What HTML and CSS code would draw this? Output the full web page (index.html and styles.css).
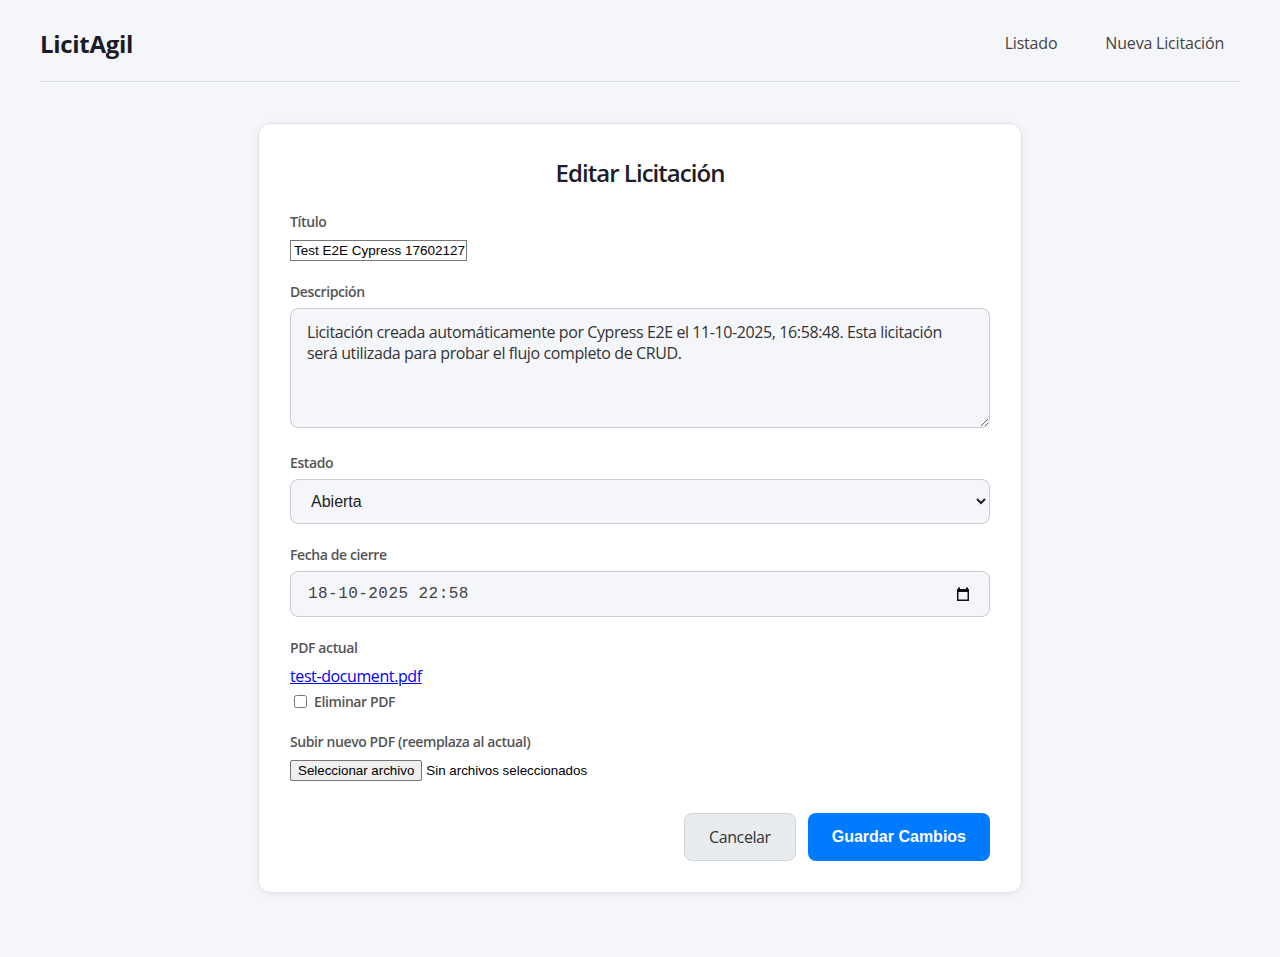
FILE: index.html
```html
<!DOCTYPE html>
<html lang="es">
<head>
<meta charset="utf-8">
<title>LicitAgil - Editar Licitación</title>
<link rel="stylesheet" href="styles.css">
</head>
<body>
<div class="page">
  <header class="topbar">
    <div class="brand">LicitAgil</div>
    <nav class="nav">
      <a class="nav-link" href="#">Listado</a>
      <a class="nav-link" href="#">Nueva Licitación</a>
    </nav>
  </header>

  <main class="card">
    <h1 class="card-title">Editar Licitación</h1>

    <div class="group">
      <label class="label">Título</label>
      <div class="plain-row"><input class="plain-input" type="text" value="Test E2E Cypress 1760212728"></div>
    </div>

    <div class="group group-desc">
      <label class="label">Descripción</label>
      <textarea class="field textarea">Licitación creada automáticamente por Cypress E2E el 11-10-2025, 16:58:48. Esta licitación será utilizada para probar el flujo completo de CRUD.</textarea>
    </div>

    <div class="group">
      <label class="label">Estado</label>
      <select class="field select">
        <option>Abierta</option>
        <option>Cerrada</option>
      </select>
    </div>

    <div class="group">
      <label class="label">Fecha de cierre</label>
      <div class="field date">
        <span class="date-text">18-10-2025 22:58</span>
        <svg class="cal-icon" width="14" height="14" viewBox="0 0 14 14" aria-hidden="true">
          <rect x="2" y="0.5" width="2" height="2.5" fill="#111"/>
          <rect x="10" y="0.5" width="2" height="2.5" fill="#111"/>
          <rect x="1" y="2" width="12" height="3" fill="#111"/>
          <rect x="1.75" y="2.75" width="10.5" height="10.5" fill="none" stroke="#111" stroke-width="1.5"/>
        </svg>
      </div>
    </div>

    <div class="group group-pdf">
      <label class="label">PDF actual</label>
      <a class="pdf-link" href="#">test-document.pdf</a>
      <label class="check-row"><input type="checkbox" class="check"> <span>Eliminar PDF</span></label>
    </div>

    <div class="group">
      <label class="label">Subir nuevo PDF (reemplaza al actual)</label>
      <div class="file-row">
        <button class="file-btn" type="button">Seleccionar archivo</button>
        <span class="file-text">Sin archivos seleccionados</span>
      </div>
    </div>

    <div class="actions">
      <button class="btn btn-cancel" type="button">Cancelar</button>
      <button class="btn btn-save" type="button">Guardar Cambios</button>
    </div>
  </main>
</div>
</body>
</html>
```

FILE: styles.css
```css
* { box-sizing: border-box; }

html, body {
  margin: 0;
  padding: 0;
}

body {
  background: #f5f6fa;
  font-family: "Open Sans", "Noto Sans", sans-serif;
  letter-spacing: -0.025em;
  color: #222;
  min-height: 957px;
}

.page {
  padding: 0 40px;
}

.topbar {
  display: flex;
  align-items: center;
  justify-content: space-between;
  height: 82px;
  padding-top: 5px;
  border-bottom: 1px solid #dcdfe4;
}

.brand {
  font-size: 24px;
  font-weight: 700;
  color: #1c1c28;
  letter-spacing: -0.3px;
}

.nav {
  display: flex;
  gap: 16px;
}

.nav-link {
  font-size: 16px;
  color: #444;
  text-decoration: none;
  padding: 0 16px;
  font-weight: 500;
  letter-spacing: -0.012em;
}

.card {
  width: 764px;
  margin: 41px auto 0;
  background: #fff;
  border: 1px solid #dfe2e7;
  border-radius: 12px;
  box-shadow: 0 2px 10px rgba(0, 0, 0, 0.06);
  padding: 31px;
}

.card-title {
  margin: 0 0 20px;
  text-align: center;
  font-size: 24px;
  font-weight: 600;
  line-height: 36px;
  letter-spacing: -0.04em;
  color: #1e1e28;
}

.group {
  margin-bottom: 20px;
}

.group-desc {
  margin-bottom: 24px;
}

.label {
  display: block;
  font-size: 14px;
  font-weight: 600;
  line-height: 21px;
  color: #555;
  margin-bottom: 6px;
}

.plain-row {
  height: 23px;
}

.plain-input {
  font-family: "Liberation Sans", Arial, sans-serif;
  font-size: 13.5px;
  letter-spacing: 0;
  width: 177px;
  height: 21px;
  padding: 1px 1px 1px 3px;
  border: 1px solid #767676;
  border-radius: 0;
  color: #000;
  background: #fff;
  margin: 0;
}

.field {
  display: block;
  width: 100%;
  background: #f5f6fa;
  border: 1px solid #c9ccd1;
  border-radius: 8px;
  color: #333;
  margin: 0;
}

.textarea {
  height: 120px;
  padding: 13px 18px 11px 16px;
  font-family: "Open Sans", "Noto Sans", sans-serif;
  letter-spacing: -0.025em;
  font-size: 16px;
  line-height: 21px;
  resize: vertical;
}

.select {
  height: 45px;
  padding: 0 12px 0 16px;
  font-family: "Liberation Sans", Arial, sans-serif;
  letter-spacing: 0;
  font-size: 16px;
  color: #222;
}

.date {
  height: 46px;
  display: flex;
  align-items: center;
  justify-content: space-between;
  padding: 0 19px 0 17px;
}

.date-text {
  font-family: "Liberation Mono", monospace;
  font-size: 16px;
  letter-spacing: 0.45px;
  color: #444;
}

.cal-icon {
  display: block;
}

.group-pdf {
  margin-bottom: 19px;
}

.pdf-link {
  display: block;
  margin-top: 4px;
  font-size: 16px;
  line-height: 24px;
  color: #0000ee;
  text-decoration: underline;
}

.check-row {
  display: flex;
  align-items: center;
  margin-top: 3px;
  font-size: 14px;
  font-weight: 600;
  color: #555;
  line-height: 21px;
}

.check {
  margin: 3px 7px 3px 4px;
  width: 13px;
  height: 13px;
}

.file-row {
  display: flex;
  align-items: center;
  gap: 4px;
  margin-top: 8px;
}

.file-btn {
  font-family: "Liberation Sans", Arial, sans-serif;
  font-size: 13.33px;
  letter-spacing: 0;
  height: 21px;
  padding: 1px 7px;
  border: 1px solid #767676;
  border-radius: 2px;
  background: #efefef;
  color: #000;
}

.file-text {
  font-family: "Liberation Sans", Arial, sans-serif;
  font-size: 13.33px;
  letter-spacing: 0;
  color: #000;
}

.actions {
  display: flex;
  justify-content: flex-end;
  gap: 12px;
  margin-top: 32px;
}

.btn {
  border-radius: 8px;
  font-size: 16px;
  padding: 12px 24px;
  cursor: pointer;
}

.btn-cancel {
  background: #e9ecef;
  border: 1px solid #d0d4d9;
  color: #333;
  font-family: "Open Sans", "Noto Sans", sans-serif;
  letter-spacing: -0.025em;
}

.btn-save {
  background: #007bff;
  border: 0;
  color: #fff;
  font-family: "Liberation Sans", Arial, sans-serif;
  letter-spacing: 0;
  font-weight: 700;
}
```
